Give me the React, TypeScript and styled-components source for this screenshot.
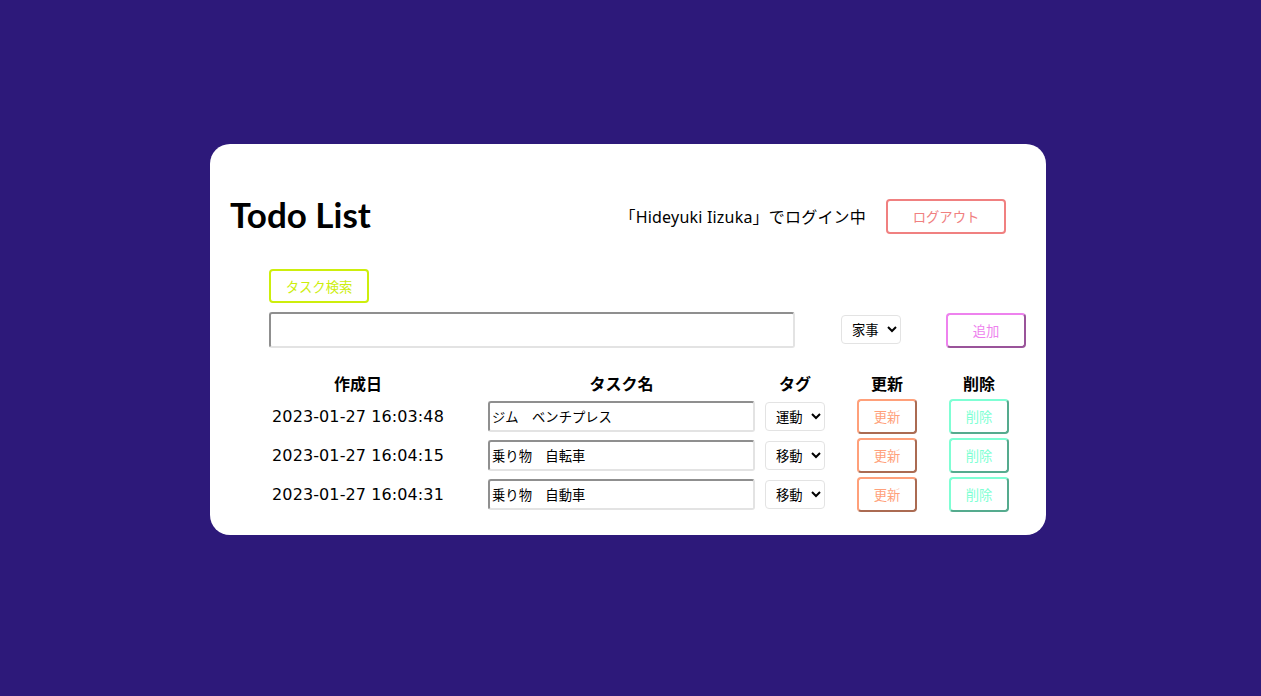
import React from "react";
import styled, { createGlobalStyle } from "styled-components";

const Global = createGlobalStyle`
  html, body { margin: 0; padding: 0; }
  body {
    background: #2d197a;
    font-family: "Noto Sans", "Noto Sans CJK JP", sans-serif;
    color: #000;
  }
`;

const Page = styled.div`
  min-height: 696px;
  box-sizing: border-box;
  display: flex;
  justify-content: center;
  align-items: flex-start;
  padding: 144px 5px 0 0;
`;

const Card = styled.div`
  width: 836px;
  height: 391px;
  box-sizing: border-box;
  background: #fff;
  border-radius: 20px;
  padding: 54px 20px 0 20px;
  display: flex;
  flex-direction: column;
`;

const Header = styled.div`
  display: flex;
  align-items: center;
  height: 36px;
`;

const Title = styled.h1`
  margin: 0;
  font-family: "Lato", "Noto Sans", sans-serif;
  font-weight: 700;
  font-size: 35px;
  line-height: 36px;
  margin-top: -4px;
  flex: 1;
`;

const LoginText = styled.span`
  font-family: "Noto Sans", "Noto Sans CJK JP", sans-serif;
  font-size: 16px;
  letter-spacing: 0.2px;
  margin-right: 20px;
`;

const Button = styled.button<{ $c: string; $w: number; $h?: number; $style?: string }>`
  box-sizing: border-box;
  width: ${(p) => p.$w}px;
  height: ${(p) => p.$h ?? 35}px;
  flex-shrink: 0;
  background: #fff;
  color: ${(p) => p.$c};
  border: 2px ${(p) => p.$style ?? "outset"} ${(p) => p.$c};
  border-radius: 4px;
  font-family: "Noto Sans CJK JP", sans-serif;
  font-size: 13.33px;
  padding: 0;
  cursor: pointer;
`;

const LogoutButton = styled(Button)`
  margin-right: 20px;
`;

const Body = styled.div`
  padding-left: 39px;
  margin-top: 35px;
  display: flex;
  flex-direction: column;
`;

const SearchRow = styled.div`
  display: flex;
`;

const AddRow = styled.div`
  display: flex;
  align-items: center;
  margin-top: 9px;
`;

const TextInput = styled.input<{ $w: number; $h: number }>`
  box-sizing: border-box;
  width: ${(p) => p.$w}px;
  height: ${(p) => p.$h}px;
  flex-shrink: 0;
  border-style: solid;
  border-width: 2px;
  border-color: #8f8f8f #e3e3e3 #e3e3e3 #8f8f8f;
  border-radius: 3px;
  padding: 0 2px;
  font-family: "Noto Sans CJK JP", sans-serif;
  font-size: 13.33px;
  color: #000;
  background: #fff;
  outline: none;
`;

const Select = styled.select`
  box-sizing: border-box;
  width: 60px;
  height: 29px;
  flex-shrink: 0;
  border: 1px solid #e3e3e3;
  border-radius: 4px;
  background: #fff;
  font-family: "Noto Sans CJK JP", sans-serif;
  font-size: 13.33px;
  color: #000;
  padding: 0 2px 0 6px;
`;

const TagSelect = styled(Select)`
  margin-left: 46px;
  margin-top: -2px;
`;

const AddButton = styled(Button)`
  margin-left: 45px;
`;

const Table = styled.div`
  margin-top: 23px;
  display: grid;
  grid-template-columns: 219px 277px 92px 92px 60px;
  grid-template-rows: 24px;
  grid-auto-rows: 35px;
  row-gap: 4px;
  align-items: center;
  justify-items: start;
`;

const HeadCell = styled.div<{ $w: number }>`
  width: ${(p) => p.$w}px;
  text-align: center;
  font-family: "Noto Sans CJK JP", sans-serif;
  font-weight: 700;
  font-size: 16px;
  line-height: 24px;
`;

const DateCell = styled.div`
  width: 178px;
  text-align: center;
  font-family: "DejaVu Sans", sans-serif;
  font-size: 16px;
  letter-spacing: 0.1px;
`;

type Todo = { date: string; name: string; tag: string };

const todos: Todo[] = [
  { date: "2023-01-27 16:03:48", name: "ジム　ベンチプレス", tag: "運動" },
  { date: "2023-01-27 16:04:15", name: "乗り物　自転車", tag: "移動" },
  { date: "2023-01-27 16:04:31", name: "乗り物　自動車", tag: "移動" },
];

const tags = ["家事", "運動", "移動", "仕事"];

export default function App() {
  return (
    <>
      <Global />
      <Page>
        <Card>
          <Header>
            <Title>Todo List</Title>
            <LoginText>「Hideyuki Iizuka」でログイン中</LoginText>
            <LogoutButton $c="#f08080" $w={120} $style="solid">
              ログアウト
            </LogoutButton>
          </Header>
          <Body>
            <SearchRow>
              <Button $c="#cdee0c" $w={100} $h={34} $style="solid">
                タスク検索
              </Button>
            </SearchRow>
            <AddRow>
              <TextInput $w={526} $h={36} defaultValue="" />
              <TagSelect defaultValue="家事">
                {tags.map((t) => (
                  <option key={t}>{t}</option>
                ))}
              </TagSelect>
              <AddButton $c="#ee82ee" $w={80}>
                追加
              </AddButton>
            </AddRow>
            <Table>
              <HeadCell $w={178}>作成日</HeadCell>
              <HeadCell $w={267}>タスク名</HeadCell>
              <HeadCell $w={60}>タグ</HeadCell>
              <HeadCell $w={60}>更新</HeadCell>
              <HeadCell $w={60}>削除</HeadCell>
              {todos.map((t) => (
                <React.Fragment key={t.date}>
                  <DateCell>{t.date}</DateCell>
                  <TextInput $w={267} $h={31} defaultValue={t.name} />
                  <Select defaultValue={t.tag}>
                    {tags.map((g) => (
                      <option key={g}>{g}</option>
                    ))}
                  </Select>
                  <Button $c="#ffa07a" $w={60}>
                    更新
                  </Button>
                  <Button $c="#7fffd4" $w={60}>
                    削除
                  </Button>
                </React.Fragment>
              ))}
            </Table>
          </Body>
        </Card>
      </Page>
    </>
  );
}
